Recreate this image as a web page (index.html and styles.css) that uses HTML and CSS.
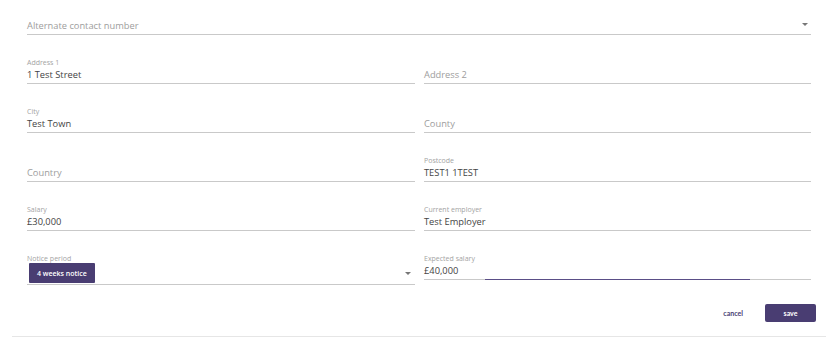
FILE: index.html
```html
<!DOCTYPE html>
<html lang="en">
<head>
<meta charset="utf-8">
<title>Contact details</title>
<link rel="stylesheet" href="styles.css">
</head>
<body>
<div class="panel">
  <form class="form">
    <div class="field full select">
      <div class="label"></div>
      <div class="value placeholder">Alternate contact number</div>
      <span class="arrow"></span>
    </div>
    <div class="field">
      <div class="label">Address 1</div>
      <div class="value">1 Test Street</div>
    </div>
    <div class="field">
      <div class="label"></div>
      <div class="value placeholder">Address 2</div>
    </div>
    <div class="field">
      <div class="label">City</div>
      <div class="value">Test Town</div>
    </div>
    <div class="field">
      <div class="label"></div>
      <div class="value placeholder">County</div>
    </div>
    <div class="field">
      <div class="label"></div>
      <div class="value placeholder">Country</div>
    </div>
    <div class="field">
      <div class="label">Postcode</div>
      <div class="value">TEST1 1TEST</div>
    </div>
    <div class="field">
      <div class="label">Salary</div>
      <div class="value">£30,000</div>
    </div>
    <div class="field">
      <div class="label">Current employer</div>
      <div class="value">Test Employer</div>
    </div>
    <div class="field select">
      <div class="label">Notice period</div>
      <div class="chips"><span class="chip">4 weeks notice</span></div>
      <span class="arrow"></span>
    </div>
    <div class="field focused">
      <div class="label">Expected salary</div>
      <div class="value">£40,000</div>
      <span class="focus-bar"></span>
    </div>
  </form>
  <div class="actions">
    <button type="button" class="btn-cancel">cancel</button>
    <button type="button" class="btn-save">save</button>
  </div>
</div>
</body>
</html>
```

FILE: styles.css
```css
* { box-sizing: border-box; }

html, body {
  margin: 0;
  padding: 0;
  background: #ffffff;
}

body {
  font-family: "Open Sans", "DejaVu Sans", sans-serif;
  color: #444444;
}

.panel {
  margin: 0 14px 0 12px;
  padding: 10px 15px 0 15px;
  border-bottom: 1px solid #e6e6e6;
  height: 337px;
}

.form {
  display: grid;
  grid-template-columns: 388px 387px;
  column-gap: 9px;
  row-gap: 24px;
  align-items: start;
}

.field {
  position: relative;
  border-bottom: 1px solid #c9c9c9;
  padding-bottom: 1px;
}

.field.full {
  grid-column: 1 / span 2;
}

.label {
  height: 8px;
  font-size: 7px;
  line-height: 8px;
  color: #a3a3a3;
  white-space: nowrap;
}

.value {
  height: 14px;
  margin-top: 1px;
  font-size: 9.3px;
  line-height: 14px;
  color: #444444;
  white-space: nowrap;
}

.value.placeholder {
  color: #9d9d9d;
}

.arrow {
  position: absolute;
  right: 4px;
  bottom: 9px;
  width: 0;
  height: 0;
  border-left: 3px solid transparent;
  border-right: 3px solid transparent;
  border-top: 3px solid #777777;
}

.field.full .arrow {
  bottom: 8px;
  right: 3px;
}

.chips {
  display: flex;
  padding: 0 0 0 2px;
  margin-top: 0;
}

.chip {
  display: inline-flex;
  align-items: center;
  height: 20px;
  padding: 0 8px;
  background: #493d72;
  color: #ffffff;
  font-size: 7px;
  font-weight: 600;
  border-radius: 1px;
}

.focus-bar {
  position: absolute;
  left: 61px;
  width: 265px;
  bottom: -1px;
  height: 1px;
  background: #5a4e87;
}

.actions {
  display: flex;
  justify-content: flex-end;
  align-items: center;
  gap: 22px;
  margin-top: 19px;
  margin-right: -5px;
}

.actions button {
  font-family: "Lato", "Open Sans", sans-serif;
  font-weight: 700;
  font-size: 7px;
  border: 0;
  cursor: pointer;
}

.btn-cancel {
  background: transparent;
  color: #4a3e73;
  padding: 0;
}

.btn-save {
  width: 51px;
  height: 18px;
  background: #493d72;
  color: #ffffff;
  border-radius: 2px;
}
```
